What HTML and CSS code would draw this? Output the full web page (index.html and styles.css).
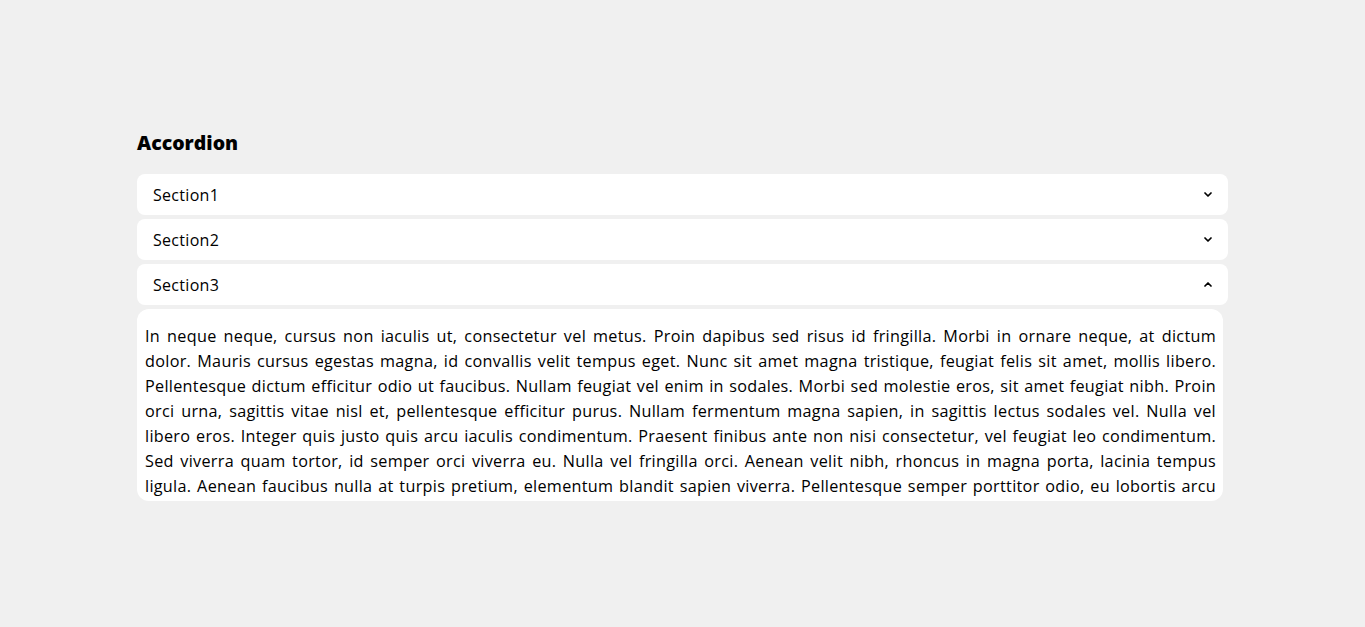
FILE: index.html
```html
<!DOCTYPE html>
<html lang="en">
<head>
<meta charset="utf-8">
<title>Accordion</title>
<link rel="stylesheet" href="styles.css">
</head>
<body>
<main class="wrap">
  <h1 class="title">Accordion</h1>
  <div class="accordion">
    <div class="item">
      <span class="label">Section1</span>
      <svg class="chev" viewBox="0 0 8 5" width="8" height="5"><path d="M1 1 L4 4 L7 1" fill="none" stroke="#000" stroke-width="1.7" stroke-linecap="round" stroke-linejoin="round"/></svg>
    </div>
    <div class="item">
      <span class="label">Section2</span>
      <svg class="chev" viewBox="0 0 8 5" width="8" height="5"><path d="M1 1 L4 4 L7 1" fill="none" stroke="#000" stroke-width="1.7" stroke-linecap="round" stroke-linejoin="round"/></svg>
    </div>
    <div class="item">
      <span class="label">Section3</span>
      <svg class="chev" viewBox="0 0 8 5" width="8" height="5"><path d="M1 4 L4 1 L7 4" fill="none" stroke="#000" stroke-width="1.7" stroke-linecap="round" stroke-linejoin="round"/></svg>
    </div>
    <div class="panel">
      <p class="text">
        <span class="ln">In neque neque, cursus non iaculis ut, consectetur vel metus. Proin dapibus sed risus id fringilla. Morbi in ornare neque, at dictum</span>
        <span class="ln">dolor. Mauris cursus egestas magna, id convallis velit tempus eget. Nunc sit amet magna tristique, feugiat felis sit amet, mollis libero.</span>
        <span class="ln">Pellentesque dictum efficitur odio ut faucibus. Nullam feugiat vel enim in sodales. Morbi sed molestie eros, sit amet feugiat nibh. Proin</span>
        <span class="ln">orci urna, sagittis vitae nisl et, pellentesque efficitur purus. Nullam fermentum magna sapien, in sagittis lectus sodales vel. Nulla vel</span>
        <span class="ln">libero eros. Integer quis justo quis arcu iaculis condimentum. Praesent finibus ante non nisi consectetur, vel feugiat leo condimentum.</span>
        <span class="ln">Sed viverra quam tortor, id semper orci viverra eu. Nulla vel fringilla orci. Aenean velit nibh, rhoncus in magna porta, lacinia tempus</span>
        <span class="ln">ligula. Aenean faucibus nulla at turpis pretium, elementum blandit sapien viverra. Pellentesque semper porttitor odio, eu lobortis arcu</span>
      </p>
    </div>
  </div>
</main>
</body>
</html>
```
FILE: styles.css
```css
html, body {
  margin: 0;
  padding: 0;
  background: #f0f0f0;
  font-family: "Open Sans", "Liberation Sans", sans-serif;
  color: #000;
}
.wrap {
  width: 1091px;
  margin: 0 auto;
  padding-top: 130px;
}
.title {
  margin: 0 0 18px;
  font-family: "Open Sans", sans-serif;
  font-size: 19.5px;
  font-weight: 800;
  line-height: 26px;
}
.accordion {
  display: flex;
  flex-direction: column;
  gap: 4px;
}
.item {
  background: #fff;
  border-radius: 8px;
  height: 41px;
  padding: 0 16px 0 16px;
  display: flex;
  align-items: center;
  justify-content: space-between;
  box-sizing: border-box;
}
.label {
  font-size: 16px;
  font-weight: 500;
  letter-spacing: 0.3px;
}
.chev {
  display: block;
}
.panel {
  background: #fff;
  border-radius: 12px;
  margin-right: 5px;
  height: 192px;
  overflow: hidden;
  box-sizing: border-box;
  padding: 15px 7px 0 8px;
}
.text {
  margin: 0;
  font-size: 16.2px;
  line-height: 25px;
  letter-spacing: 0.3px;
}
.ln {
  display: block;
  text-align: justify;
  text-align-last: justify;
}
```
